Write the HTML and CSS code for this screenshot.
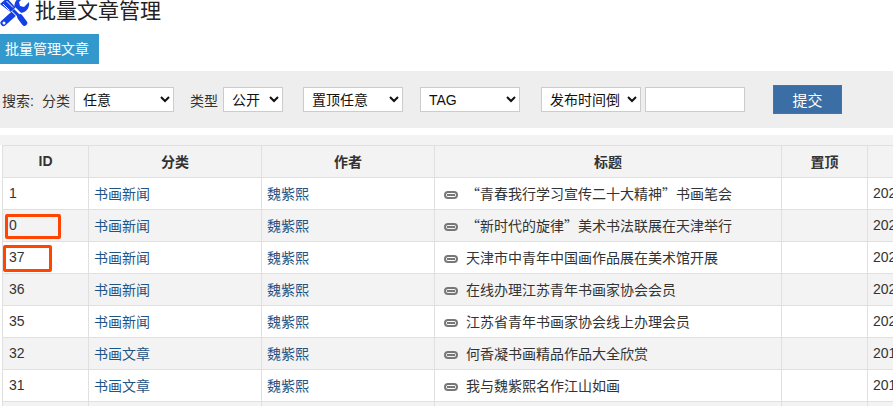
FILE: index.html
```html
<!DOCTYPE html>
<html lang="zh-CN">
<head>
    <meta charset="UTF-8">
    <title>批量文章管理</title>
    <link rel="stylesheet" href="styles.css">
</head>
<body>

    <!-- Title -->
    <div class="page-title">
        <svg class="title-icon" viewBox="0 0 30 27" width="30" height="27">
            <!-- wrench -->
            <path fill="none" stroke="#1240e6" stroke-width="6" stroke-linecap="round" d="M3.500 23 19 9"/>
            <path fill="#1240e6" d="M15 10C13 4 16-2 22-3l2 0-5 5 1 4 4 1 5-5c1 6-3 11-9 11-1 0-2 0-3-1z"/>
            <circle cx="4" cy="23" r="1.500" fill="#fff"/>
            <!-- screwdriver -->
            <path fill="none" stroke="#fff" stroke-width="6" d="M13 9 19 15"/>
            <path fill="#1240e6" d="M0 4 7-2 15.500 7.500 10.500 12z"/>
            <path fill="none" stroke="#fff" stroke-width="1" d="M3 4 9.500 10.500M6.500 1 13 7.500"/>
            <path fill="none" stroke="#1240e6" stroke-width="3" d="M13 10 20 17"/>
            <path fill="none" stroke="#1240e6" stroke-width="5.500" stroke-linecap="round" d="M20 17 24.500 23"/>
        </svg>
        <h1>批量文章管理</h1>
    </div>

    <a href="#" class="batch-btn">批量管理文章</a>

    <!-- Search filters -->
    <form class="filter-bar">
        <span class="filter-label">搜索:</span>
        <span class="filter-label">分类</span>
        <select class="sel-cate"><option>任意</option></select>
        <span class="filter-label label-type">类型</span>
        <select class="sel-type"><option>公开</option></select>
        <select class="sel-top"><option>置顶任意</option></select>
        <select class="sel-tag"><option>TAG</option></select>
        <select class="sel-order"><option>发布时间倒序</option></select>
        <input type="text" class="filter-input">
        <button type="button" class="submit-btn">提交</button>
    </form>

    <!-- Article list -->
    <div class="list-strip"></div>
    <div class="list-wrap">
        <table class="list-table">
            <colgroup>
                <col class="col-id"><col class="col-cate"><col class="col-author">
                <col class="col-title"><col class="col-top"><col class="col-date">
            </colgroup>
            <thead>
                <tr><th>ID</th><th>分类</th><th>作者</th><th>标题</th><th>置顶</th><th></th></tr>
            </thead>
            <tbody>
                <tr>
                    <td>1</td><td><a href="#">书画新闻</a></td><td><a href="#">魏紫熙</a></td>
                    <td class="title-cell"><svg class="link-icon" viewBox="0 0 14 8"><use href="#chain"/></svg>“青春我行学习宣传二十大精神”书画笔会</td>
                    <td></td><td>2022-11-20</td>
                </tr>
                <tr>
                    <td>0</td><td><a href="#">书画新闻</a></td><td><a href="#">魏紫熙</a></td>
                    <td class="title-cell"><svg class="link-icon" viewBox="0 0 14 8"><use href="#chain"/></svg>“新时代的旋律”美术书法联展在天津举行</td>
                    <td></td><td>2022-11-18</td>
                </tr>
                <tr>
                    <td>37</td><td><a href="#">书画新闻</a></td><td><a href="#">魏紫熙</a></td>
                    <td class="title-cell"><svg class="link-icon" viewBox="0 0 14 8"><use href="#chain"/></svg>天津市中青年中国画作品展在美术馆开展</td>
                    <td></td><td>2022-11-15</td>
                </tr>
                <tr>
                    <td>36</td><td><a href="#">书画新闻</a></td><td><a href="#">魏紫熙</a></td>
                    <td class="title-cell"><svg class="link-icon" viewBox="0 0 14 8"><use href="#chain"/></svg>在线办理江苏青年书画家协会会员</td>
                    <td></td><td>2022-10-28</td>
                </tr>
                <tr>
                    <td>35</td><td><a href="#">书画新闻</a></td><td><a href="#">魏紫熙</a></td>
                    <td class="title-cell"><svg class="link-icon" viewBox="0 0 14 8"><use href="#chain"/></svg>江苏省青年书画家协会线上办理会员</td>
                    <td></td><td>2022-10-26</td>
                </tr>
                <tr>
                    <td>32</td><td><a href="#">书画文章</a></td><td><a href="#">魏紫熙</a></td>
                    <td class="title-cell"><svg class="link-icon" viewBox="0 0 14 8"><use href="#chain"/></svg>何香凝书画精品作品大全欣赏</td>
                    <td></td><td>2019-05-12</td>
                </tr>
                <tr>
                    <td>31</td><td><a href="#">书画文章</a></td><td><a href="#">魏紫熙</a></td>
                    <td class="title-cell"><svg class="link-icon" viewBox="0 0 14 8"><use href="#chain"/></svg>我与魏紫熙名作江山如画</td>
                    <td></td><td>2019-05-10</td>
                </tr>
                <tr>
                    <td></td><td></td><td></td><td></td><td></td><td></td>
                </tr>
            </tbody>
        </table>

        <!-- Red marks drawn over the ID column -->
        <div class="mark mark-first"></div>
        <div class="mark mark-second"></div>
    </div>

    <svg class="icon-defs" width="0" height="0">
        <symbol id="chain" viewBox="0 0 14 8">
            <rect x="1" y="1" width="12" height="6" rx="3" fill="none" stroke="#777" stroke-width="2"/>
            <path fill="none" stroke="#777" stroke-width="2" d="M3 4h8"/>
        </symbol>
    </svg>

</body>
</html>
```
FILE: styles.css
```css
/* Full Page Styling */
html, body {
    height: 100%;
}

body {
    margin: 0;
    background-color: #fff;
    color: #333;
    font-family: "Liberation Sans", "Noto Sans CJK SC", sans-serif;
    font-size: 14px;
    overflow: hidden;
}

a {
    color: #1d5587;
    text-decoration: none;
}

/* Title */
.page-title {
    display: flex;
    align-items: flex-start;
    height: 27px;
    overflow: hidden;
}

.title-icon {
    flex: none;
    margin-right: 5px;
}

.page-title h1 {
    margin: -3px 0 0;
    font-size: 21px;
    font-weight: normal;
    line-height: 28px;
    color: #222;
}

/* Button */
.batch-btn {
    display: block;
    width: 94px;
    height: 30px;
    margin-top: 7px;
    padding-left: 5px;
    background-color: #3399cc;
    color: #fff;
    font-size: 14px;
    line-height: 30px;
}

/* Search Filters */
.filter-bar {
    display: flex;
    align-items: center;
    height: 57px;
    margin-top: 7px;
    padding-left: 2px;
    background-color: #eee;
}

.filter-label {
    margin-right: 4px;
    white-space: nowrap;
}

.filter-label:first-child {
    margin-right: 8px;
}

.filter-bar .label-type {
    margin-left: 16px;
    margin-right: 5px;
}

.filter-bar select,
.filter-input {
    box-sizing: border-box;
    height: 25px;
    padding: 0 0 0 4px;
    border: 1px solid #ccc;
    background-color: #fff;
    color: #111;
    font-family: inherit;
    font-size: 14px;
}

.sel-cate, .sel-top, .sel-tag, .sel-order {
    width: 100px;
}

.sel-type {
    width: 60px;
}

.sel-top {
    margin-left: 20px;
}

.sel-tag {
    margin-left: 17px;
}

.filter-bar .sel-order {
    margin-left: 21px;
    padding-right: 4px;
}

.filter-input {
    width: 100px;
    margin-left: 4px;
}

.submit-btn {
    box-sizing: border-box;
    width: 69px;
    height: 29px;
    margin-left: 28px;
    border: 1px solid #337ab7;
    background-color: #3b6ea5;
    color: #fff;
    font-family: inherit;
    font-size: 15px;
}

/* Article List */
.list-strip {
    height: 10px;
    margin-top: 7px;
    background-color: #f3f3f3;
}

.list-wrap {
    position: relative;
    padding-left: 2px;
}

.list-table {
    table-layout: fixed;
    width: 1000px;
    border-collapse: collapse;
    border-top: 1px solid #e0e0e0;
}

.col-id { width: 86px; }
.col-cate, .col-author { width: 173px; }
.col-title { width: 347px; }
.col-top { width: 86px; }
.col-date { width: 135px; }

.list-table th,
.list-table td {
    border: 1px solid #e0e0e0;
    padding: 0 5px 2px;
    height: 29px;
    white-space: nowrap;
    overflow: hidden;
    text-align: left;
    font-size: 14px;
}

.list-table td:first-child {
    padding-left: 6px;
}

.list-table th {
    background-color: #f3f3f3;
    text-align: center;
}

.list-table tbody tr:nth-child(even) td {
    background-color: #f3f3f3;
}

/* Quotes in titles take the full CJK width */
.list-table .title-cell {
    font-family: "Noto Sans CJK SC", sans-serif;
}

.link-icon {
    width: 14px;
    height: 8px;
    margin: 0 8px 0 4px;
}

.icon-defs {
    position: absolute;
}

/* Red marks */
.mark {
    position: absolute;
    box-sizing: border-box;
    border: 3px solid #ff4500;
    border-radius: 2px;
}

.mark-first {
    left: 5px;
    top: 69px;
    width: 56px;
    height: 25px;
}

.mark-second {
    left: 3px;
    top: 100px;
    width: 49px;
    height: 27px;
}
```
